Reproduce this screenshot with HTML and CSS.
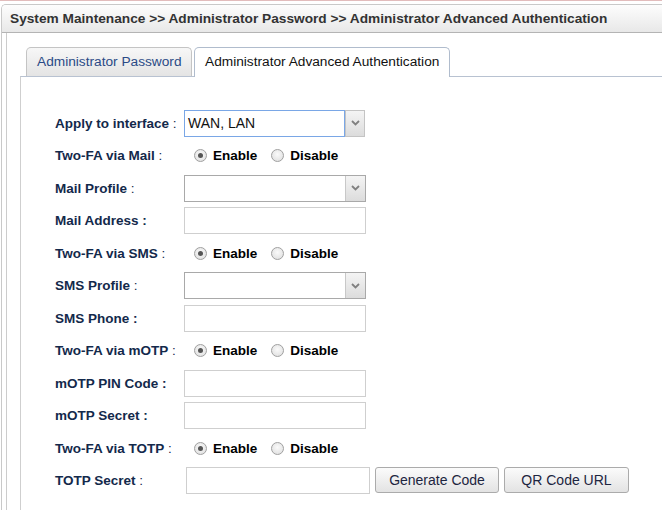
FILE: index.html
```html
<!DOCTYPE html>
<html>
<head>
<meta charset="utf-8">
<link rel="stylesheet" href="styles.css">
</head>
<body>
<div class="topline"></div>
<div class="frame">
  <div class="header">System Maintenance &gt;&gt; Administrator Password &gt;&gt; Administrator Advanced Authentication</div>
  <div class="body">
    <div class="tabs">
      <div class="tab tab-inactive">Administrator Password</div>
      <div class="tab tab-active">Administrator Advanced Authentication</div>
    </div>
    <div class="panel">
      <div class="form">
        <div class="row">
          <div class="label"><b>Apply to interface</b> :</div>
          <div class="ctrl">
            <div class="combo">
              <div class="combo-text focus">WAN, LAN</div>
              <div class="combo-btn sep"><svg width="9" height="6" viewBox="0 0 9 6"><path d="M1 1 L4.5 4.5 L8 1" fill="none" stroke="#808080" stroke-width="1.8"/></svg></div>
            </div>
          </div>
        </div>
        <div class="row">
          <div class="label"><b>Two-FA via Mail</b> :</div>
          <div class="ctrl radios">
            <span class="radio checked"></span><span class="rtext">Enable</span>
            <span class="radio"></span><span class="rtext">Disable</span>
          </div>
        </div>
        <div class="row">
          <div class="label"><b>Mail Profile</b> :</div>
          <div class="ctrl">
            <div class="select">
              <div class="select-text"></div>
              <div class="combo-btn"><svg width="9" height="6" viewBox="0 0 9 6"><path d="M1 1 L4.5 4.5 L8 1" fill="none" stroke="#808080" stroke-width="1.8"/></svg></div>
            </div>
          </div>
        </div>
        <div class="row">
          <div class="label"><b>Mail Address :</b></div>
          <div class="ctrl"><div class="input"></div></div>
        </div>
        <div class="row">
          <div class="label"><b>Two-FA via SMS</b> :</div>
          <div class="ctrl radios">
            <span class="radio checked"></span><span class="rtext">Enable</span>
            <span class="radio"></span><span class="rtext">Disable</span>
          </div>
        </div>
        <div class="row">
          <div class="label"><b>SMS Profile</b> :</div>
          <div class="ctrl">
            <div class="select">
              <div class="select-text"></div>
              <div class="combo-btn"><svg width="9" height="6" viewBox="0 0 9 6"><path d="M1 1 L4.5 4.5 L8 1" fill="none" stroke="#808080" stroke-width="1.8"/></svg></div>
            </div>
          </div>
        </div>
        <div class="row">
          <div class="label"><b>SMS Phone :</b></div>
          <div class="ctrl"><div class="input"></div></div>
        </div>
        <div class="row">
          <div class="label"><b>Two-FA via mOTP</b> :</div>
          <div class="ctrl radios">
            <span class="radio checked"></span><span class="rtext">Enable</span>
            <span class="radio"></span><span class="rtext">Disable</span>
          </div>
        </div>
        <div class="row">
          <div class="label"><b>mOTP PIN Code :</b></div>
          <div class="ctrl"><div class="input"></div></div>
        </div>
        <div class="row">
          <div class="label"><b>mOTP Secret :</b></div>
          <div class="ctrl"><div class="input"></div></div>
        </div>
        <div class="row">
          <div class="label"><b>Two-FA via TOTP</b> :</div>
          <div class="ctrl radios">
            <span class="radio checked"></span><span class="rtext">Enable</span>
            <span class="radio"></span><span class="rtext">Disable</span>
          </div>
        </div>
        <div class="row row-last">
          <div class="label"><b>TOTP Secret</b> :</div>
          <div class="ctrl totp">
            <div class="input input-totp"></div>
            <div class="btn btn-gen">Generate Code</div>
            <div class="btn btn-qr">QR Code URL</div>
          </div>
        </div>
      </div>
    </div>
  </div>
</div>
</body>
</html>
```

FILE: styles.css
```css
html, body {
  margin: 0;
  padding: 0;
  background: #ffffff;
  overflow: hidden;
}
body {
  font-family: "Liberation Sans", Arial, sans-serif;
  width: 662px;
  height: 510px;
}
.topline {
  height: 1px;
  background: #e2bcbc;
}
.frame {
  box-sizing: border-box;
  margin: 3px 0 0 1px;
  border: 1px solid #c9c9c9;
  border-right: none;
  border-bottom: none;
  border-radius: 5px 0 0 0;
  height: 506px;
}
.header {
  height: 27px;
  line-height: 27px;
  padding-left: 8px;
  background: linear-gradient(#fdfdfd, #e8e8e8);
  border-bottom: 1px solid #b4b4b4;
  border-radius: 4px 0 0 0;
  font-weight: bold;
  font-size: 13.7px;
  color: #333333;
  white-space: nowrap;
}
.body {
  box-sizing: border-box;
  margin-left: 4px;
  border-left: 1px solid #cccccc;
  padding: 14px 0 0 13px;
  height: 477px;
}
.tabs {
  display: flex;
  padding-left: 6px;
  gap: 2px;
  position: relative;
  z-index: 1;
}
.tab {
  box-sizing: border-box;
  height: 30px;
  line-height: 28px;
  padding-left: 10px;
  font-size: 13.7px;
  border: 1px solid #c4c4c4;
  border-bottom: none;
  border-radius: 5px 5px 0 0;
  white-space: nowrap;
  margin-bottom: -1px;
}
.tab-inactive {
  width: 166px;
  height: 29px;
  margin-bottom: 0;
  background: linear-gradient(#f7f7f7, #e4e4e4);
  color: #2a4a86;
}
.tab-active {
  width: 256px;
  background: #ffffff;
  color: #111111;
  border-color: #b0bccd;
}
.panel {
  box-sizing: border-box;
  border-top: 1px solid #b8c2d1;
  border-left: 1px solid #cfcfcf;
  padding: 30px 0 0 34px;
  height: 434px;
}
.form {
  display: flex;
  flex-direction: column;
}
.row {
  display: flex;
  align-items: center;
  height: 32.5px;
}
.label {
  width: 129px;
  flex: none;
  font-size: 13.5px;
  color: #13294b;
  white-space: nowrap;
}
.ctrl {
  display: flex;
  align-items: center;
}
.combo {
  display: flex;
  height: 27px;
}
.combo-text {
  box-sizing: border-box;
  width: 161px;
  height: 27px;
  border: 1px solid #7aa7e6;
  font-size: 14px;
  line-height: 25px;
  padding-left: 3px;
  color: #111;
}
.combo-btn {
  box-sizing: border-box;
  width: 20px;
  height: 100%;
  background: linear-gradient(#f4f4f4, #dcdcdc);
  border-left: 1px solid #c8c8c8;
  display: flex;
  align-items: center;
  justify-content: center;
}
.combo-btn.sep {
  border: 1px solid #c4c4c4;
}
.select {
  box-sizing: border-box;
  display: flex;
  width: 182px;
  height: 27px;
  border: 1px solid #a9a9a9;
}
.select-text {
  flex: 1;
}
.input {
  box-sizing: border-box;
  width: 182px;
  height: 27px;
  border: 1px solid #cfcfcf;
  background: #fff;
}
.radios {
  padding-left: 10px;
  font-size: 13.5px;
  font-weight: bold;
  color: #000;
}
.radio {
  box-sizing: border-box;
  width: 13px;
  height: 13px;
  border-radius: 50%;
  border: 1px solid #a0a0a0;
  background: radial-gradient(circle at 50% 40%, #fafafa, #dcdcdc);
  display: flex;
  align-items: center;
  justify-content: center;
}
.radio.checked::after {
  content: "";
  width: 5px;
  height: 5px;
  border-radius: 50%;
  background: #555555;
}
.rtext {
  margin-left: 6px;
  margin-right: 14px;
}
.totp {
  gap: 5px;
}
.input-totp {
  width: 184px;
  margin-left: 2px;
}
.btn {
  box-sizing: border-box;
  height: 26px;
  line-height: 24px;
  border: 1px solid #ababab;
  border-radius: 3px;
  background: linear-gradient(#fbfbfb, #e3e3e3);
  font-size: 14px;
  color: #1d2540;
  text-align: center;
  margin-top: -2px;
}
.btn-gen {
  width: 124px;
}
.btn-qr {
  width: 125px;
}
```
